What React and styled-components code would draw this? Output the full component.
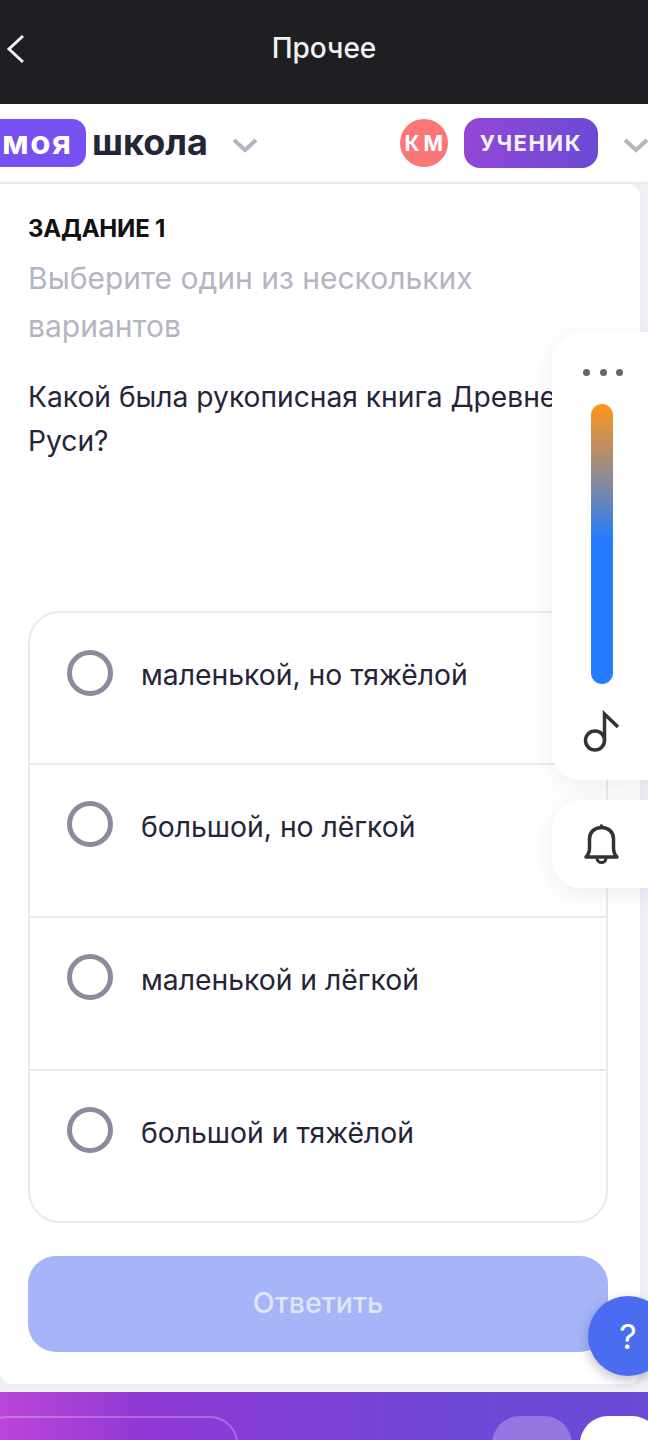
import React from "react";
import styled, { createGlobalStyle } from "styled-components";

const GlobalStyle = createGlobalStyle`
html, body {
  margin: 0;
  padding: 0;
  background: #f1f1f6;
  font-family: Inter, "Noto Sans", sans-serif;
}
* { box-sizing: border-box; }
`
const Page = styled.div`
position: relative;
width: 648px;
height: 1440px;
overflow: hidden;
display: flex;
flex-direction: column;
`
const TopBar = styled.header`
height: 104px;
flex: none;
background: #1f1f23;
display: flex;
align-items: center;
justify-content: center;
position: relative;
`
const TopTitle = styled.div`
color: #f2f2f2;
font-size: 28px;
font-weight: 500;
line-height: 32px;
margin-top: -8px;
`
const BackIcon = styled.svg`
position: absolute;
left: 5px;
top: 34px;
`
const Nav = styled.nav`
height: 80px;
flex: none;
background: #fff;
border-bottom: 2px solid #ebebef;
display: flex;
align-items: center;
padding-bottom: 2px;
`
const Logo = styled.div`
width: 86px;
height: 48px;
flex: none;
margin-top: 2px;
background: #7650f0;
border-radius: 0 14px 14px 0;
color: #fff;
font-size: 33px;
font-weight: 700;
line-height: 46px;
padding-left: 2px;
letter-spacing: 1.5px;
`
const LogoText = styled.div`
margin-left: 6px;
flex: none;
color: #25253a;
font-size: 36px;
font-weight: 700;
line-height: 42px;
`
const Chevron = styled.svg`
flex: none;
margin-left: ${(p) => p.$gap}px;
margin-top: 6px;
`
const Avatar = styled.div`
width: 48px;
height: 48px;
margin-left: 142px;
margin-top: 2px;
flex: none;
border-radius: 50%;
background: #fb7676;
color: #fff;
font-size: 21px;
font-weight: 700;
letter-spacing: 4px;
display: flex;
align-items: center;
justify-content: center;
padding-left: 4px;
`
const RoleBadge = styled.div`
width: 134px;
height: 50px;
margin-left: 16px;
margin-top: 2px;
flex: none;
border-radius: 16px;
background: linear-gradient(90deg, #9346d6, #6a4bd5);
color: #f4f0fb;
font-size: 22px;
font-weight: 700;
letter-spacing: 1.5px;
display: flex;
align-items: center;
justify-content: center;
`
const Task = styled.main`
width: 640px;
height: 1200px;
flex: none;
background: #fff;
border-radius: 0 12px 12px 12px;
padding: 29px 32px 32px 28px;
display: flex;
flex-direction: column;
box-shadow: 0 0 8px rgba(60, 60, 90, 0.05);
`
const TaskLabel = styled.div`
color: #111;
font-size: 24px;
font-weight: 700;
line-height: 32px;
letter-spacing: -0.2px;
`
const Hint = styled.div`
color: #b4b4c2;
font-size: 30px;
line-height: 48px;
margin-top: 9px;
width: 500px;
`
const Question = styled.div`
color: #25253a;
font-size: 28.2px;
line-height: 44px;
margin-top: 25px;
white-space: pre-line;
`
const Options = styled.div`
margin-top: 148px;
width: 580px;
border: 2px solid #e9e9ee;
border-radius: 32px;
overflow: hidden;
`
const Option = styled.div`
height: ${(p) => p.$height}px;
display: flex;
align-items: flex-start;
padding: ${(p) => (p.$first ? 37 : 36)}px 0 0 37px;
gap: 28px;
border-top: ${(p) => (p.$first ? "none" : "2px solid #e9e9ee")};
`
const Radio = styled.div`
width: 46px;
height: 46px;
flex: none;
border: 5px solid #8b8b9e;
border-radius: 50%;
`
const OptionText = styled.div`
color: #25253a;
font-size: 28.3px;
line-height: 46px;
margin-top: ${(p) => (p.$first ? 2 : 3)}px;
`
const AnswerButton = styled.button`
width: 580px;
height: 96px;
margin-top: 33px;
padding-bottom: 4px;
border: none;
border-radius: 28px;
background: #a5b5f8;
color: #dfe5fb;
font-family: inherit;
font-size: 28.5px;
font-weight: 500;
`
const SidePanel = styled.aside`
position: absolute;
left: 552px;
width: 120px;
background: #fff;
border-radius: 28px;
box-shadow: 0 6px 24px rgba(40, 40, 70, 0.08);
`
const VolumePanel = styled(SidePanel)`
top: 332px;
height: 448px;
`
const BellPanel = styled(SidePanel)`
top: 800px;
height: 88px;
`
const Dots = styled.div`
position: absolute;
top: 37px;
left: 31px;
display: flex;
gap: 9.5px;
`
const Dot = styled.span`
width: 7px;
height: 7px;
border-radius: 50%;
background: #666;
`
const VolumeBar = styled.div`
position: absolute;
left: 39px;
top: 72px;
width: 22px;
height: 280px;
border-radius: 11px;
background: linear-gradient(180deg, #ff961a 0%, #8a8a95 27%, #267cff 48%, #267cff 100%);
`
const PanelIcon = styled.svg`
position: absolute;
left: 30px;
top: ${(p) => p.$top}px;
`
const HelpButton = styled.div`
position: absolute;
left: 588px;
top: 1296px;
width: 80px;
height: 80px;
border-radius: 50%;
background: #4a6cf0;
color: #fff;
font-size: 34px;
display: flex;
align-items: center;
justify-content: center;
box-shadow: 0 4px 12px rgba(40, 40, 70, 0.3);
`
const BottomBar = styled.footer`
margin-top: 8px;
height: 48px;
flex: none;
position: relative;
background: linear-gradient(90deg, #bb46d8 0%, #9039d4 22%, #6c49d6 75%, #6a4ad6 100%);
`
const BottomField = styled.div`
position: absolute;
left: -20px;
top: 24px;
width: 258px;
height: 60px;
border: 2px solid rgba(255, 255, 255, 0.25);
border-radius: 28px;
`
const BottomPill = styled.div`
position: absolute;
left: ${(p) => p.$left}px;
top: 24px;
width: 80px;
height: 60px;
border-radius: 28px;
background: ${(p) => p.$bg};
`

const options = [
    { text: "маленькой, но тяжёлой", height: 150 },
    { text: "большой, но лёгкой", height: 153 },
    { text: "маленькой и лёгкой", height: 153 },
    { text: "большой и тяжёлой", height: 153 },
]

const ChevronDown = ({ gap }) => (
    <Chevron $gap={gap} width="26" height="16" viewBox="0 0 26 16" fill="none">
        <path d="M2 3l11 10L24 3" stroke="#b5b5c0" strokeWidth="4" />
    </Chevron>
)

function App() {
    return (
        <Page>
            <GlobalStyle />
            <TopBar>
                <BackIcon width="20" height="30" viewBox="0 0 20 30" fill="none">
                    <path d="M18 2L4 15l14 13" stroke="#f2f2f2" strokeWidth="3" />
                </BackIcon>
                <TopTitle>Прочее</TopTitle>
            </TopBar>
            <Nav>
                <Logo>моя</Logo>
                <LogoText>школа</LogoText>
                <ChevronDown gap={24} />
                <Avatar>КМ</Avatar>
                <RoleBadge>УЧЕНИК</RoleBadge>
                <ChevronDown gap={25} />
            </Nav>
            <Task>
                <TaskLabel>ЗАДАНИЕ 1</TaskLabel>
                <Hint>Выберите один из нескольких вариантов</Hint>
                <Question>{"Какой была рукописная книга Древней\nРуси?"}</Question>
                <Options>
                    {options.map((option, i) => (
                        <Option key={option.text} $first={i === 0} $height={option.height}>
                            <Radio />
                            <OptionText $first={i === 0}>{option.text}</OptionText>
                        </Option>
                    ))}
                </Options>
                <AnswerButton>Ответить</AnswerButton>
            </Task>
            <BottomBar>
                <BottomField />
                <BottomPill $left={492} $bg="#9577e2" />
                <BottomPill $left={580} $bg="#fff" />
            </BottomBar>
            <VolumePanel>
                <Dots><Dot /><Dot /><Dot /></Dots>
                <VolumeBar />
                <PanelIcon $top={378} width="40" height="44" viewBox="0 0 40 44" fill="none">
                    <circle cx="13" cy="30.5" r="9.5" stroke="#333" strokeWidth="3.5" />
                    <path d="M22.5 30.5V4L36 17" stroke="#333" strokeWidth="3.5" />
                </PanelIcon>
            </VolumePanel>
            <BellPanel>
                <PanelIcon $top={22} width="40" height="44" viewBox="0 0 40 44" fill="none">
                    <path d="M4 35c2-2 3.5-5 3.5-9v-9c0-7 5-11.5 12-11.5s12 4.5 12 11.5v9c0 4 1.5 7 3.5 9z" stroke="#333" strokeWidth="3.5" strokeLinejoin="round" />
                    <path d="M15 36c0 6 9 6 9 0M19.5 2.5v3" stroke="#333" strokeWidth="3" />
                </PanelIcon>
            </BellPanel>
            <HelpButton>?</HelpButton>
        </Page>
    );
}

export default App;
